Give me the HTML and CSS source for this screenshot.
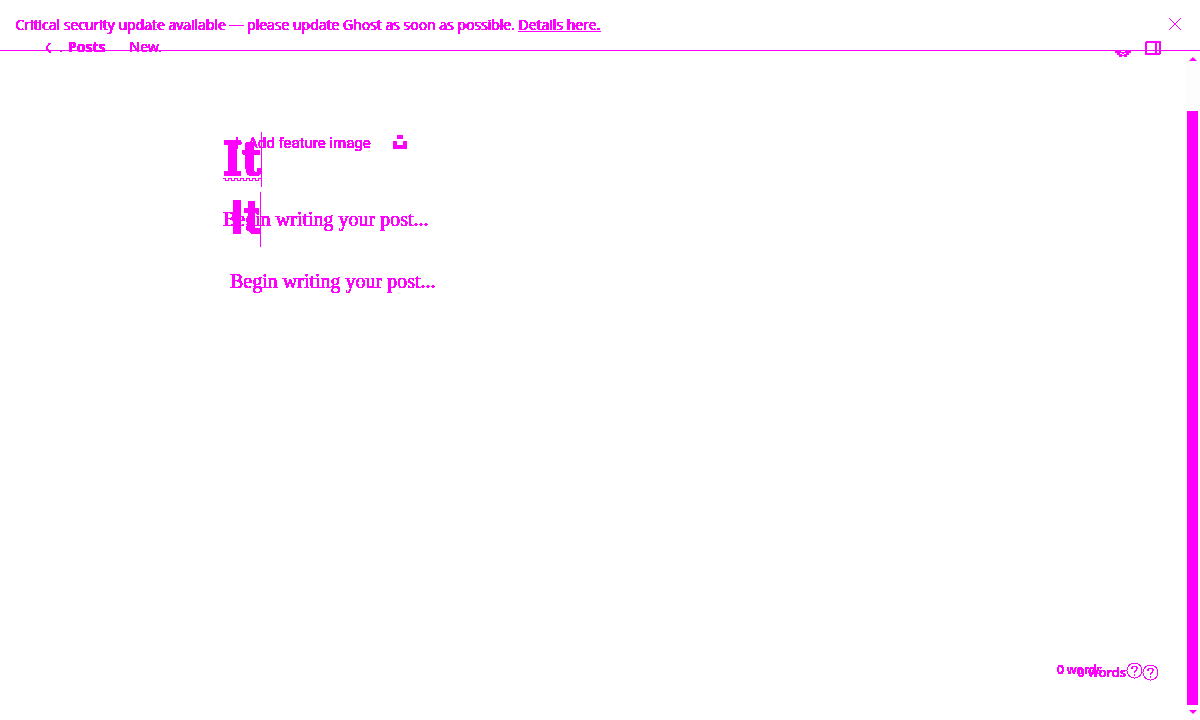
FILE: index.html
```html
<!DOCTYPE html>
<html lang="en">
<head>
<meta charset="utf-8">
<title>New post</title>
<link rel="stylesheet" href="styles.css">
</head>
<body>
<svg class="defs" aria-hidden="true"><filter id="crisp" x="0" y="0" width="1" height="1"><feComponentTransfer><feFuncA type="discrete" tableValues="0 1 1 1 1 1 1 1 1 1"/></feComponentTransfer></filter><filter id="firm" x="0" y="0" width="1" height="1"><feComponentTransfer><feFuncA type="discrete" tableValues="0 0 1 1 1"/></feComponentTransfer></filter></svg>
<div class="app">
  <header class="top">
    <div class="alert">
      <p>Critical security update available — please update Ghost as soon as possible. <a href="#">Details here.</a></p>
      <button class="close" aria-label="Close"><svg width="12" height="12" viewBox="0 0 12 12"><path d="M0 0l12 12M12 0L0 12"/></svg></button>
    </div>
    <nav class="bar">
      <a class="back" href="#"><svg width="6" height="10" viewBox="0 0 6 10"><path d="M5 0L2 4v2l4 4" stroke-width="1.8"/></svg><span class="dot">.</span><b>Posts</b></a>
      <span class="status">New.</span>
      <span class="tools">
        <svg width="16" height="6" viewBox="0 0 16 6"><path class="solid" d="M0 0h6v1h4V0h6v2h-2v2h-2v2H9V5H7v1H4V4H2V2H0z"/><path d="M5 2.500h2M9 2.500h2M7 3.500h2" stroke="#fff"/></svg>
        <button aria-label="Toggle sidebar"><svg width="16" height="14" viewBox="0 0 16 14"><rect x="1" y="1" width="14" height="12" rx="1" stroke-width="2"/><path d="M11 1v12" stroke-width="2"/></svg></button>
      </span>
    </nav>
  </header>
  <main class="editor">
    <div class="feature">
      <button class="add"><svg width="9" height="12" viewBox="0 0 9 12"><path d="M4 0v12M0 6h9" stroke-width="1.5"/></svg>Add feature image</button>
      <button class="unsplash" aria-label="Unsplash"><svg width="14" height="14" viewBox="0 0 14 14"><path class="solid" d="M4 0h6v4H4zM0 6h4v4h6V6h4v8H0z"/></svg></button>
    </div>
    <div class="draft first">
      <h1 class="serif">It</h1>
      <svg class="wave" width="39" height="4" viewBox="0 0 39 4"><path d="M0 .5h2l1 2h2l1-2h2l1 2h2l1-2h2l1 2h2l1-2h2l1 2h2l1-2h2l1 2h2l1-2h2l1 2h2l1-2h2"/></svg>
      <p>Begin writing your post...</p>
    </div>
    <div class="draft second">
      <h1>It</h1>
      <p>Begin writing your post...</p>
    </div>
  </main>
  <footer class="count one"><span>0 words</span><svg width="17" height="17" viewBox="0 0 17 17"><circle cx="8.5" cy="8.5" r="7.5"/><path d="M6 6.5c0-3 5-3 5 0 0 2-2.500 1.800-2.500 4M8.500 11.500v2" stroke-width="1.5"/></svg></footer>
  <footer class="count two"><span>0 words</span><svg width="17" height="17" viewBox="0 0 17 17"><circle cx="8.5" cy="8.5" r="7.5"/><path d="M6 6.5c0-3 5-3 5 0 0 2-2.500 1.800-2.500 4M8.500 11.500v2" stroke-width="1.5"/></svg></footer>
  <div class="scroll" aria-hidden="true"><i class="up"></i><i class="thumb"></i><i class="down"></i></div>
</div>
</body>
</html>
```
FILE: styles.css
```css
* { box-sizing: border-box; }
body { margin: 0; background: #fff; color: #f0f; font-family: "Noto Sans", sans-serif; }
.defs { position: absolute; width: 0; height: 0; }
.app { position: relative; min-height: 100vh; overflow: hidden; }
p, h1 { margin: 0; }
p, h1, .back, .status, .add, .count span { filter: url(#crisp); }
a { color: inherit; }
button { border: 0; padding: 0; background: none; color: inherit; font: inherit; display: flex; align-items: center; }
svg { display: block; fill: none; stroke: currentColor; stroke-width: 1; shape-rendering: crispEdges; }
.solid { fill: currentColor; stroke: none; }
.top { height: 51px; border-bottom: 1px solid #f0f; }
.alert { display: flex; justify-content: space-between; padding: 15px 19px 0 15px; height: 38px; font-family: "Open Sans", sans-serif; font-size: 14px; line-height: 20px; font-weight: 400; }
.alert p { filter: url(#firm); text-shadow: 1px 0 #f0f; }
.alert .close { height: 18px; }
.bar { display: flex; align-items: flex-start; padding: 0 39px 0 45px; height: 20px; font-size: 14px; line-height: 18px; }
.back { display: flex; text-decoration: none; }
.back svg { margin-top: 5px; }
.dot { width: 17px; padding-left: 8px; }
.back b { font-weight: 700; }
.status { margin-left: 24px; height: 14px; overflow: hidden; font-weight: 400; }
.tools { display: flex; gap: 14px; margin-left: auto; padding-top: 3px; }
.tools > svg { margin-top: 10px; }
.tools button { height: 14px; }
.editor { position: relative; padding: 82px 0 0 223px; }
.feature { display: flex; align-items: center; gap: 22px; padding-left: 10px; height: 20px; font: 400 15px/20px Roboto, sans-serif; }
.feature .unsplash { height: 14px; margin-bottom: 2px; }
.add { gap: 6px; }
.draft { position: absolute; }
.draft h1 { width: max-content; border-right: 1px solid #f0f; font-size: 48px; line-height: 55px; height: 55px; }
.draft p { font: 20px/30px "Liberation Serif", serif; white-space: nowrap; }
.first { left: 223px; top: 81px; }
.first p { margin-top: 17px; }
.first .serif { font-family: "DejaVu Serif Condensed", "Liberation Serif", serif; font-size: 46px; line-height: 55px; -webkit-text-stroke: 1px #f0f; }
.wave { position: absolute; top: 46px; left: 0; }
.second { left: 230px; top: 141px; }
.second h1 { font-family: Roboto, sans-serif; font-weight: 700; line-height: 52px; }
.second p { margin-top: 19px; }
.count { position: absolute; display: flex; align-items: center; font-size: 12px; line-height: 20px; font-weight: 500; }
.one { right: 57px; bottom: 40px; gap: 24px; }
.two { right: 41px; bottom: 38px; gap: 16px; font-size: 13px; }
.scroll { position: absolute; right: 0; top: 51px; bottom: 0; width: 15px; padding: 6px 2px 6px 2px; background: #fdfdfd; display: flex; flex-direction: column; align-items: center; }
.up, .down { border: 4px solid transparent; border-top: 0; border-bottom: 4px solid #f0f; }
.down { border-bottom: 0; border-top: 4px solid #f0f; }
.thumb { flex: 1; width: 11px; margin: 50px 0 5px; background: #f0f; }
```
